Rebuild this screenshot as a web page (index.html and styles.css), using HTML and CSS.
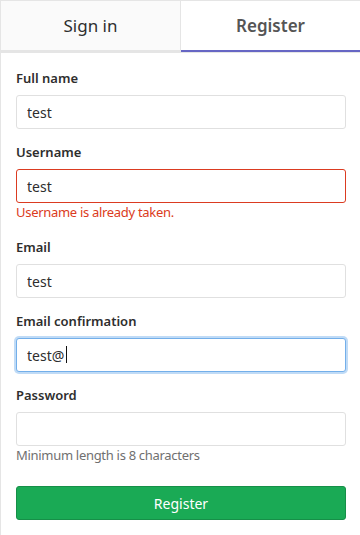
FILE: index.html
```html
<!DOCTYPE html>
<html lang="en">
<head>
    <meta charset="UTF-8">
    <meta name="viewport" content="width=device-width, initial-scale=1.0">
    <title>Register</title>
    <link rel="stylesheet" href="styles.css">
</head>
<body>
    <div class="auth-box">
        <div class="nav-tabs">
            <a class="tab" href="#">Sign in</a>
            <a class="tab active" href="#">Register</a>
        </div>

        <form class="register-form">
            <div class="form-group">
                <label for="name">Full name</label>
                <input type="text" id="name" class="form-control" value="test">
            </div>

            <div class="form-group">
                <label for="username">Username</label>
                <input type="text" id="username" class="form-control is-invalid" value="test">
                <p class="error-text">Username is already taken.</p>
            </div>

            <div class="form-group">
                <label for="email">Email</label>
                <input type="text" id="email" class="form-control" value="test">
            </div>

            <div class="form-group">
                <label for="email-confirm">Email confirmation</label>
                <div class="input-wrap">
                    <input type="text" id="email-confirm" class="form-control is-focused" value="test@">
                    <span class="caret"></span>
                </div>
            </div>

            <div class="form-group">
                <label for="password">Password</label>
                <input type="password" id="password" class="form-control">
                <p class="help-text">Minimum length is 8 characters</p>
            </div>

            <button type="submit" class="btn-register">Register</button>
        </form>
    </div>
</body>
</html>
```

FILE: styles.css
```css
* {
    margin: 0;
    padding: 0;
    box-sizing: border-box;
}

body {
    font-family: "Noto Sans", sans-serif;
    font-size: 13px;
    color: #2e2e2e;
    background: white;
}

.auth-box {
    border-left: 1px solid #e5e5e5;
    border-top: 1px solid #e5e5e5;
    min-height: 100vh;
}

.nav-tabs {
    display: flex;
    border-bottom: 1px solid #e5e5e5;
}

.tab {
    flex: 1;
    height: 51px;
    line-height: 49px;
    text-align: center;
    font-size: 17px;
    color: #2e2e2e;
    text-decoration: none;
    background: #fafafa;
    border-bottom: 2px solid #e5e5e5;
}

.tab:first-child {
    border-right: 1px solid #e5e5e5;
}

.tab.active {
    background: white;
    color: #555;
    font-weight: 600;
    border-bottom-color: #6666c4;
}

.register-form {
    display: flex;
    flex-direction: column;
    padding: 16px 14px 16px 15px;
}

.form-group {
    margin-bottom: 14px;
}

label {
    display: block;
    font-weight: 600;
    line-height: 18px;
    margin-bottom: 8px;
}

.form-control {
    display: block;
    width: 100%;
    height: 34px;
    padding: 0 10px;
    border: 1px solid #e0e0e0;
    border-radius: 3px;
    font-family: inherit;
    font-size: 14px;
    color: #2e2e2e;
    outline: none;
}

.form-control.is-invalid {
    border-color: #db3b21;
}

.form-control.is-focused {
    border-color: #73afea;
    box-shadow: 0 0 0 2px rgba(115, 175, 234, 0.45);
}

.input-wrap {
    position: relative;
}

.caret {
    position: absolute;
    left: 50px;
    top: 8px;
    width: 1px;
    height: 17px;
    background: #111;
}

.error-text {
    color: #db3b21;
    line-height: 18px;
    margin-bottom: 3px;
    letter-spacing: -0.3px;
}

.help-text {
    color: #707070;
    line-height: 18px;
    letter-spacing: -0.3px;
}

.btn-register {
    display: block;
    width: 100%;
    height: 34px;
    margin-top: 8px;
    background: #1aaa55;
    border: 1px solid #168f48;
    border-radius: 3px;
    color: white;
    font-family: inherit;
    font-size: 14px;
    cursor: pointer;
}
```
